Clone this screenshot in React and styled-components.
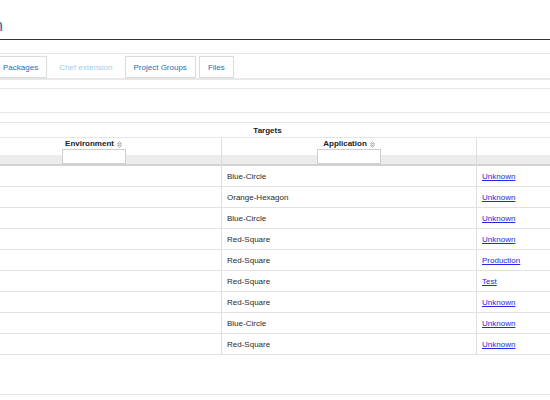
import styled, { createGlobalStyle } from "styled-components";

const GlobalStyle = createGlobalStyle`
	* {
		box-sizing: border-box;
	}
	html, body {
		margin: 0;
		padding: 0;
		background: #fff;
		overflow: hidden;
	}
	body {
		font-family: "Liberation Sans", Arial, Helvetica, sans-serif;
		font-size: 8px;
		color: #333;
	}
`;

// the view is scrolled a bit to the right, so the page starts left of the window
const Page = styled.div`
	width: 640px;
	height: 400px;
	margin-left: -34px;
	display: flex;
	flex-direction: column;
`;

const Header = styled.header`
	height: 40px;
	border-bottom: 1px solid #333;
	display: flex;
`;

const TitleBox = styled.div`
	width: 37px;
	display: flex;
	justify-content: flex-end;
	white-space: nowrap;
	padding-top: 18px;
`;

const Title = styled.h1`
	margin: 0;
	font-size: 16px;
	line-height: 16px;
	font-weight: normal;
	color: #2b69a8;
`;

const TabNav = styled.nav`
	margin-top: 13px;
	border-top: 1px solid #e6e6e6;
	border-bottom: 2px solid #e8e8e8;
	padding: 2px 0 0 28px;
	display: flex;
	gap: 3px;
`;

const Tab = styled.a`
	height: 22px;
	padding: 0 8px;
	display: flex;
	align-items: center;
	border: 1px solid ${(props) => (props.disabled ? "transparent" : "#dcdcdc")};
	box-shadow: ${(props) =>
		props.disabled ? "none" : "0 0 1px rgba(0, 0, 0, 0.08)"};
	background: #fff;
	color: ${(props) => (props.disabled ? "#9fcdef" : "#2a6db3")};
	font-size: 8px;
	white-space: nowrap;
	cursor: pointer;
`;

const Toolbar = styled.div`
	margin-top: 8px;
	height: 25px;
	border-top: 1px solid #e8e8e8;
	border-bottom: 1px solid #e8e8e8;
`;

const Table = styled.table`
	margin-top: 9px;
	width: 603px;
	table-layout: fixed;
	border-collapse: separate;
	border-spacing: 0;
	border-top: 1px solid #e6e6e6;
`;

const GroupCell = styled.th`
	height: 15px;
	padding: 0;
	text-align: center;
	font-weight: bold;
	font-size: 8px;
	color: #222;
	border-bottom: 1px solid #e6e6e6;
	vertical-align: middle;
`;

const HeadCell = styled.th`
	height: 28px;
	padding: 1px 0 0;
	vertical-align: top;
	text-align: center;
	font-weight: bold;
	font-size: 8px;
	color: #222;
	background: linear-gradient(to bottom, #fff 17px, #ececec 17px);
	border-bottom: 2px solid #d2d2d2;
	border-left: ${(props) => (props.first ? "none" : "1px solid #dedede")};
`;

const HeadLabel = styled.div`
	height: 10px;
	line-height: 10px;
	display: flex;
	justify-content: center;
	align-items: center;
	gap: 3px;
`;

const FilterInput = styled.input`
	display: block;
	margin: 0 auto;
	width: 64px;
	height: 15px;
	border: 1px solid #cfcfcf;
	background: #fff;
	padding: 0 3px;
	font-size: 8px;
`;

const Cell = styled.td`
	height: 21px;
	padding: 0 5px;
	vertical-align: middle;
	font-size: 8px;
	color: #2a2a2a;
	border-bottom: 1px solid #e3e3e3;
	border-left: ${(props) => (props.first ? "none" : "1px solid #dedede")};
	white-space: nowrap;

	a {
		color: #2727e6;
		text-decoration: underline;
	}
`;

const Footer = styled.div`
	margin-top: 39px;
	border-top: 1px solid #e6e6e6;
	flex: 1;
`;

const SortIcon = () => (
	<svg width="5" height="7" viewBox="0 0 5 7">
		<path d="M2.5 0.5 L4.5 2.8 L0.5 2.8 Z" fill="none" stroke="#999" strokeWidth="0.7" />
		<path d="M2.5 6.5 L4.5 4.2 L0.5 4.2 Z" fill="none" stroke="#999" strokeWidth="0.7" />
	</svg>
);

const rows = [
	{ app: "Blue-Circle", target: "Unknown" },
	{ app: "Orange-Hexagon", target: "Unknown" },
	{ app: "Blue-Circle", target: "Unknown" },
	{ app: "Red-Square", target: "Unknown" },
	{ app: "Red-Square", target: "Production" },
	{ app: "Red-Square", target: "Test" },
	{ app: "Red-Square", target: "Unknown" },
	{ app: "Blue-Circle", target: "Unknown" },
	{ app: "Red-Square", target: "Unknown" },
];

const App = () => {
	return (
		<>
			<GlobalStyle />
			<Page>
				<Header>
					<TitleBox>
						<Title>Deployment Configuration</Title>
					</TitleBox>
				</Header>
				<TabNav>
					<Tab>Packages</Tab>
					<Tab disabled>Chef extension</Tab>
					<Tab>Project Groups</Tab>
					<Tab>Files</Tab>
				</TabNav>
				<Toolbar />
				<Table>
					<colgroup>
						<col style={{ width: "255px" }} />
						<col style={{ width: "255px" }} />
						<col style={{ width: "93px" }} />
					</colgroup>
					<thead>
						<tr>
							<GroupCell colSpan={3}>Targets</GroupCell>
						</tr>
						<tr>
							<HeadCell first>
								<HeadLabel>
									Environment <SortIcon />
								</HeadLabel>
								<FilterInput type="text" />
							</HeadCell>
							<HeadCell>
								<HeadLabel>
									Application <SortIcon />
								</HeadLabel>
								<FilterInput type="text" />
							</HeadCell>
							<HeadCell />
						</tr>
					</thead>
					<tbody>
						{rows.map((row, idx) => (
							<tr key={idx}>
								<Cell first></Cell>
								<Cell>{row.app}</Cell>
								<Cell>
									<a href="#">{row.target}</a>
								</Cell>
							</tr>
						))}
					</tbody>
				</Table>
				<Footer />
			</Page>
		</>
	);
};

export default App;
